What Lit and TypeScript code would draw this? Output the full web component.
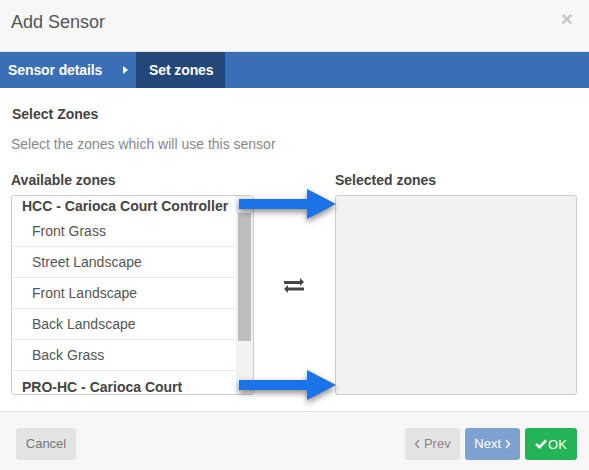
import {html, css, LitElement} from 'lit';
import {customElement} from 'lit/decorators.js';

const ZONES = ['Front Grass', 'Street Landscape', 'Front Landscape', 'Back Landscape', 'Back Grass'];

const arrow = (cls: string) => html`
  <svg class="arrow ${cls}" width="112" height="44" viewBox="0 0 112 44">
    <path d="M3 13H71V3L100 18 71 33V23H3Z" fill="#1a73e8"></path>
  </svg>
`;

@customElement('app-root')
class AppRoot extends LitElement {
  static styles = css`
    :host {
      display: block;
      position: relative;
      width: 589px;
      height: 470px;
      overflow: hidden;
      background: #fff;
      font-family: 'Liberation Sans', Arial, sans-serif;
      font-size: 14px;
      color: #444;
    }

    .header {
      display: flex;
      justify-content: space-between;
      height: 51px;
      box-sizing: content-box;
      padding: 0 11px;
      background: #f7f7f7;
      border-bottom: 1px solid #e5e5e5;
    }

    .title {
      font-size: 18px;
      line-height: 44px;
      color: #555;
    }

    .close {
      font-size: 21px;
      font-weight: bold;
      line-height: 37px;
      margin-right: 5px;
      color: #c8c8c8;
    }

    .steps {
      display: flex;
      height: 36px;
      background: #3a6eb5;
      color: #fff;
      font-weight: bold;
      line-height: 36px;
      letter-spacing: -0.1px;
    }

    .step {
      padding: 0 8px;
      width: 120px;
      display: flex;
      justify-content: space-between;
      align-items: center;
    }

    .caret {
      width: 0;
      height: 0;
      border-left: 5px solid #fff;
      border-top: 4.5px solid transparent;
      border-bottom: 4.5px solid transparent;
      margin-top: -1px;
    }

    .step.active {
      width: 76px;
      padding: 0 0 0 13px;
      background: #24477a;
    }

    .body {
      padding: 19px 12px 0 11px;
      height: 304px;
      box-sizing: content-box;
    }

    .heading {
      font-weight: bold;
      line-height: 14px;
      margin-left: 1px;
    }

    .hint {
      margin-top: 15px;
      line-height: 16px;
      color: #888;
    }

    .columns {
      display: flex;
      margin-top: 20px;
    }

    .column-title {
      font-weight: bold;
      line-height: 16px;
      height: 23px;
    }

    .box {
      display: flex;
      width: 243px;
      height: 200px;
      box-sizing: border-box;
      border: 1px solid #ccc;
      border-radius: 3px;
      overflow: hidden;
    }

    .list {
      flex: 1;
      min-width: 0;
    }

    .group {
      font-weight: bold;
      color: #444;
      padding-left: 10px;
      line-height: 20px;
    }

    .group.last {
      margin-top: 6px;
    }

    .zone {
      height: 31px;
      box-sizing: border-box;
      padding: 5px 0 0 20px;
      line-height: 20px;
      color: #555;
      border-bottom: 1px solid #e7e7e7;
    }

    .scrollbar {
      width: 17px;
      background: #f1f1f1;
      padding-top: 17px;
      box-sizing: border-box;
    }

    .thumb {
      width: 13px;
      height: 128px;
      margin-left: 2px;
      background: #bdbdbd;
    }

    .swap {
      width: 81px;
      display: flex;
      align-items: center;
      justify-content: center;
      padding-top: 4px;
      padding-right: 1px;
      box-sizing: border-box;
    }

    .swap svg {
      display: block;
    }

    .selected .box {
      width: 242px;
      background: #f2f2f2;
    }

    .footer {
      display: flex;
      align-items: flex-start;
      gap: 5px;
      height: 42px;
      padding: 16px 12px 0 16px;
      background: #f7f7f7;
      border-top: 1px solid #e5e5e5;
    }

    .btn {
      height: 32px;
      box-sizing: border-box;
      border-radius: 3px;
      font-size: 13px;
      line-height: 31px;
      text-align: center;
    }

    .btn.cancel {
      width: 60px;
      margin-right: auto;
      background: #e4e4e4;
      color: #777;
    }

    .btn.prev {
      width: 55px;
      background: #e4e4e4;
      color: #888;
    }

    .btn.next {
      width: 55px;
      background: #7ea2cf;
      color: #fff;
    }

    .btn.ok {
      width: 52px;
      background: #22b455;
      color: #fff;
      display: flex;
      align-items: center;
      justify-content: center;
      gap: 1px;
    }

    .chevron {
      display: inline-block;
      vertical-align: -1px;
    }

    .arrow {
      position: absolute;
      left: 236px;
      filter: drop-shadow(0 3px 3px rgba(0, 0, 0, 0.45));
    }

    .arrow.top {
      top: 186px;
    }

    .arrow.bottom {
      top: 367px;
    }
  `;

  render() {
    return html`
      <div class="header">
        <span class="title">Add Sensor</span>
        <span class="close">×</span>
      </div>
      <div class="steps">
        <div class="step">Sensor details<span class="caret"></span></div>
        <div class="step active">Set zones</div>
      </div>
      <div class="body">
        <div class="heading">Select Zones</div>
        <div class="hint">Select the zones which will use this sensor</div>
        <div class="columns">
          <div>
            <div class="column-title">Available zones</div>
            <div class="box">
              <div class="list">
                <div class="group">HCC - Carioca Court Controller</div>
                ${ZONES.map((z) => html`<div class="zone">${z}</div>`)}
                <div class="group last">PRO-HC - Carioca Court</div>
              </div>
              <div class="scrollbar"><div class="thumb"></div></div>
            </div>
          </div>
          <div class="swap">
            <svg width="20" height="15" viewBox="0 0 20 15">
              <path d="M0 3H16V0L20 4 16 8V6H0Z M20 9.5H4V7L0 11 4 15V12.5H20Z" fill="#444"></path>
            </svg>
          </div>
          <div class="selected">
            <div class="column-title">Selected zones</div>
            <div class="box"></div>
          </div>
        </div>
      </div>
      <div class="footer">
        <div class="btn cancel">Cancel</div>
        <div class="btn prev">
          <svg class="chevron" width="6" height="10" viewBox="0 0 6 10">
            <path d="M5 1L1.5 5 5 9" fill="none" stroke="#888" stroke-width="1.3"></path>
          </svg>
          Prev
        </div>
        <div class="btn next">
          Next
          <svg class="chevron" width="6" height="10" viewBox="0 0 6 10">
            <path d="M1 1L4.5 5 1 9" fill="none" stroke="#fff" stroke-width="1.5"></path>
          </svg>
        </div>
        <div class="btn ok">
          <svg width="12" height="10" viewBox="0 0 12 10">
            <path d="M1 5L4.5 8.2 11 1.5" fill="none" stroke="#fff" stroke-width="2.6"></path>
          </svg>
          <span>OK</span>
        </div>
      </div>
      ${arrow('top')} ${arrow('bottom')}
    `;
  }
}
